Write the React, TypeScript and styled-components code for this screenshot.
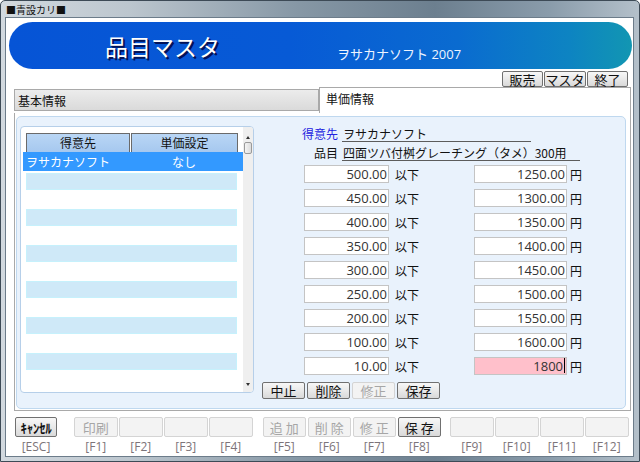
import React from "react";
import styled, { createGlobalStyle } from "styled-components";

const GlobalStyle = createGlobalStyle`
  html, body {
    margin: 0;
    padding: 0;
    background: #fff;
  }
  body {
    font-family: "Open Sans", "Noto Sans CJK JP", sans-serif;
    font-size: 12px;
    color: #111;
  }
`;

const Window = styled.div`
  width: 640px;
  height: 462px;
  box-sizing: border-box;
  border: 1px solid #3d4a56;
  border-radius: 5px 5px 0 0;
  background: linear-gradient(
    90deg,
    #d2d9df 0%,
    #bcc6ce 20%,
    #8798a6 46%,
    #6c7f8f 68%,
    #8a9cab 86%,
    #b4c0ca 100%
  );
  padding: 0 5px 4px 4px;
  display: flex;
  flex-direction: column;
`;

const TitleBar = styled.div`
  height: 16px;
  display: flex;
  align-items: center;
  padding-left: 1px;
  font-size: 10px;
  font-family: "Noto Sans CJK JP", sans-serif;
  color: #111;
`;

const Client = styled.div`
  flex: 1;
  border: 1px solid #6c7c8a;
  background: #fff;
  display: flex;
  flex-direction: column;
`;

const Banner = styled.div`
  margin: 4px 1px 0 3px;
  height: 47px;
  border-radius: 24px;
  background: linear-gradient(
    90deg,
    #0654d6 0%,
    #075ad6 45%,
    #0a6bd0 72%,
    #0d84c2 90%,
    #1296b2 100%
  );
  display: flex;
  align-items: center;
  padding-left: 96px;
`;

const BannerTitle = styled.div`
  width: 232px;
  font-family: "Noto Sans CJK JP", sans-serif;
  font-size: 23px;
  color: #fff;
  text-shadow: 1px 1px 0 #02135a, 2px 2px 0 #02135a;
`;

const BannerSub = styled.div`
  align-self: flex-end;
  margin-bottom: 7px;
  font-size: 13px;
  line-height: 16px;
  color: #eef4ff;
`;

const TopButtons = styled.div`
  display: flex;
  justify-content: flex-end;
  gap: 1px;
  margin: 2px 5px 0 0;
  height: 16px;
`;

const Button = styled.div<{ $w: number; $h: number; $off?: boolean }>`
  width: ${(p) => p.$w}px;
  height: ${(p) => p.$h}px;
  box-sizing: border-box;
  display: flex;
  align-items: center;
  justify-content: center;
  font-family: "Noto Sans CJK JP", sans-serif;
  font-size: 13px;
  border-radius: 2px;
  border: 1px solid ${(p) => (p.$off ? "#d4d4d4" : "#707070")};
  background: ${(p) =>
    p.$off ? "#f3f3f3" : "linear-gradient(#f7f7f7, #e9e9e9 50%, #d9d9d9)"};
  color: ${(p) => (p.$off ? "#a6a6a6" : "#111")};
`;

const TabRow = styled.div`
  display: flex;
  align-items: flex-start;
  height: 26px;
  margin: 0 2px 0 8px;
`;

const Tab = styled.div<{ $active?: boolean }>`
  box-sizing: border-box;
  font-family: "Noto Sans CJK JP", sans-serif;
  font-size: 12px;
  border: 1px solid #a9a9a9;
  ${(p) =>
    p.$active
      ? `
    flex: 1;
    height: 26px;
    border-bottom: none;
    background: #fff;
    padding: 2px 0 0 6px;
  `
      : `
    width: 305px;
    height: 22px;
    margin-top: 2px;
    background: linear-gradient(#ececec, #dadada);
    padding: 2px 0 0 3px;
  `}
`;

const TabPanel = styled.div`
  height: 298px;
  box-sizing: border-box;
  margin: 0 2px 0 8px;
  border: 1px solid #a9a9a9;
  border-top: none;
  padding: 3px 4px 1px 1px;
  display: flex;
`;

const BluePanel = styled.div`
  flex: 1;
  background: #e9f2fc;
  border: 1px solid #bfd8ef;
  border-radius: 5px;
  display: flex;
  align-items: flex-start;
`;

const ListBox = styled.div`
  margin: 9px 0 0 3px;
  width: 234px;
  height: 267px;
  box-sizing: border-box;
  border: 1px solid #b6cfe9;
  border-radius: 4px;
  background: #fff;
  display: flex;
  overflow: hidden;
`;

const ListBody = styled.div`
  flex: 1;
  padding-top: 6px;
  font-family: "Noto Sans CJK JP", sans-serif;
  font-size: 12px;
`;

const HeadRow = styled.div`
  display: flex;
  gap: 1px;
  margin-left: 5px;
`;

const HeadCell = styled.div<{ $w: number }>`
  width: ${(p) => p.$w}px;
  height: 19px;
  box-sizing: border-box;
  border: 1px solid #6a6a6a;
  border-bottom: none;
  background: linear-gradient(#b9d6f5, #a6c8ef);
  text-align: center;
  line-height: 18px;
`;

const SelectedRow = styled.div`
  margin-left: 2px;
  height: 19px;
  background: #3399ff;
  color: #fff;
  display: flex;
  align-items: center;
`;

const Cell = styled.div<{ $w: number; $center?: boolean }>`
  width: ${(p) => p.$w}px;
  box-sizing: border-box;
  padding-left: ${(p) => (p.$center ? 0 : 3)}px;
  text-align: ${(p) => (p.$center ? "center" : "left")};
`;

const Stripe = styled.div`
  margin: 2px 0 19px 5px;
  width: 211px;
  height: 17px;
  box-sizing: border-box;
  background: #cfe9f8;
  border: 1px solid #c6f1fc;
  & + & {
    margin-top: 0;
  }
`;

const ScrollBar = styled.div`
  width: 10px;
  background: #efefef;
  display: flex;
  flex-direction: column;
  align-items: center;
`;

const Arrow = styled.div<{ $down?: boolean }>`
  width: 0;
  height: 0;
  border-left: 2.5px solid transparent;
  border-right: 2.5px solid transparent;
  ${(p) =>
    p.$down
      ? "border-top: 3px solid #333; margin-bottom: 6px;"
      : "border-bottom: 3px solid #333; margin-top: 9px;"}
`;

const Thumb = styled.div`
  margin-top: 3px;
  width: 8px;
  height: 12px;
  box-sizing: border-box;
  border: 1px solid #9a9a9a;
  border-radius: 2px;
  background: linear-gradient(90deg, #f4f4f4, #dcdcdc);
`;

const Spacer = styled.div`
  flex: 1;
`;

const Form = styled.div`
  flex: 1;
  margin-left: 4px;
  padding-top: 9px;
  font-family: "Noto Sans CJK JP", sans-serif;
  font-size: 12px;
`;

const InfoRow = styled.div<{ $gap: number }>`
  display: flex;
  height: 16px;
  margin-bottom: ${(p) => p.$gap}px;
`;

const InfoLabel = styled.div<{ $blue?: boolean }>`
  width: 80px;
  text-align: right;
  line-height: 15px;
  color: ${(p) => (p.$blue ? "#2323e0" : "#111")};
`;

const InfoValue = styled.div<{ $w: number }>`
  width: ${(p) => p.$w}px;
  margin-left: 4px;
  padding-left: 1px;
  line-height: 15px;
  border-bottom: 1px solid #5c5c5c;
  white-space: nowrap;
`;

const PriceRow = styled.div`
  display: flex;
  align-items: center;
  height: 18px;
  margin-bottom: 6px;
  padding-left: 46px;
`;

const Field = styled.div<{ $w: number; $pink?: boolean }>`
  width: ${(p) => p.$w}px;
  height: 18px;
  box-sizing: border-box;
  border: 1px solid #c4c4c4;
  background: ${(p) => (p.$pink ? "#ffc0cb" : "#fff")};
  font-family: "Open Sans", sans-serif;
  font-size: 13px;
  line-height: 16px;
  color: #333;
  text-align: right;
  padding-right: 1px;
  white-space: nowrap;
`;

const Caret = styled.span`
  display: inline-block;
  width: 1px;
  height: 15px;
  background: #000;
  vertical-align: top;
  margin-left: 1px;
`;

const Unit = styled.div`
  width: 85px;
  box-sizing: border-box;
  padding-left: 6px;
`;

const Yen = styled.div`
  margin-left: 3px;
`;

const FormButtons = styled.div`
  display: flex;
  gap: 2px;
  margin-top: 7px;
  padding-left: 4px;
`;

const BottomBar = styled.div`
  display: flex;
  margin-top: 6px;
  padding-left: 9px;
`;

const KeyGroup = styled.div<{ $ml: number }>`
  display: flex;
  gap: 1.5px;
  margin-left: ${(p) => p.$ml}px;
`;

const KeySlot = styled.div`
  display: flex;
  flex-direction: column;
  align-items: center;
`;

const KeyLabel = styled.div`
  margin-top: 3px;
  font-size: 12px;
  line-height: 14px;
  color: #7c7479;
`;

const CancelText = styled.span`
  font-size: 13px;
  font-weight: bold;
  letter-spacing: -0.3px;
`;

const prices = [
  ["500.00", "1250.00"],
  ["450.00", "1300.00"],
  ["400.00", "1350.00"],
  ["350.00", "1400.00"],
  ["300.00", "1450.00"],
  ["250.00", "1500.00"],
  ["200.00", "1550.00"],
  ["100.00", "1600.00"],
];

type Key = { text: string; key: string; off?: boolean };

const groups: Key[][] = [
  [
    { text: "印刷", key: "[F1]", off: true },
    { text: "", key: "[F2]", off: true },
    { text: "", key: "[F3]", off: true },
    { text: "", key: "[F4]", off: true },
  ],
  [
    { text: "追 加", key: "[F5]", off: true },
    { text: "削 除", key: "[F6]", off: true },
    { text: "修 正", key: "[F7]", off: true },
    { text: "保 存", key: "[F8]" },
  ],
  [
    { text: "", key: "[F9]", off: true },
    { text: "", key: "[F10]", off: true },
    { text: "", key: "[F11]", off: true },
    { text: "", key: "[F12]", off: true },
  ],
];

const groupMargins = [17, 10, 9];

export default function App() {
  return (
    <>
      <GlobalStyle />
      <Window>
        <TitleBar>■青設カリ■</TitleBar>
        <Client>
          <Banner>
            <BannerTitle>品目マスタ</BannerTitle>
            <BannerSub>ヲサカナソフト 2007</BannerSub>
          </Banner>

          <TopButtons>
            <Button $w={41} $h={16}>販売</Button>
            <Button $w={42} $h={16}>マスタ</Button>
            <Button $w={41} $h={16}>終了</Button>
          </TopButtons>

          <TabRow>
            <Tab>基本情報</Tab>
            <Tab $active>単価情報</Tab>
          </TabRow>

          <TabPanel>
            <BluePanel>
              <ListBox>
                <ListBody>
                  <HeadRow>
                    <HeadCell $w={104}>得意先</HeadCell>
                    <HeadCell $w={107}>単価設定</HeadCell>
                  </HeadRow>
                  <SelectedRow>
                    <Cell $w={108}>ヲサカナソフト</Cell>
                    <Cell $w={106} $center>
                      なし
                    </Cell>
                  </SelectedRow>
                  {Array.from({ length: 6 }).map((_, i) => (
                    <Stripe key={i} />
                  ))}
                </ListBody>
                <ScrollBar>
                  <Arrow />
                  <Thumb />
                  <Spacer />
                  <Arrow $down />
                </ScrollBar>
              </ListBox>

              <Form>
                <InfoRow $gap={3}>
                  <InfoLabel $blue>得意先</InfoLabel>
                  <InfoValue $w={188}>ヲサカナソフト</InfoValue>
                </InfoRow>
                <InfoRow $gap={4}>
                  <InfoLabel>品目</InfoLabel>
                  <InfoValue $w={237}>四面ツバ付桝グレーチング（タメ）300用</InfoValue>
                </InfoRow>

                {prices.map(([qty, price]) => (
                  <PriceRow key={qty}>
                    <Field $w={85}>{qty}</Field>
                    <Unit>以下</Unit>
                    <Field $w={93}>{price}</Field>
                    <Yen>円</Yen>
                  </PriceRow>
                ))}
                <PriceRow>
                  <Field $w={85}>10.00</Field>
                  <Unit>以下</Unit>
                  <Field $w={93} $pink>
                    1800
                    <Caret />
                  </Field>
                  <Yen>円</Yen>
                </PriceRow>

                <FormButtons>
                  <Button $w={43} $h={17}>中止</Button>
                  <Button $w={43} $h={17}>削除</Button>
                  <Button $w={43} $h={17} $off>
                    修正
                  </Button>
                  <Button $w={43} $h={17}>保存</Button>
                </FormButtons>
              </Form>
            </BluePanel>
          </TabPanel>

          <BottomBar>
            <KeySlot>
              <Button $w={42} $h={20}>
                <CancelText>ｷｬﾝｾﾙ</CancelText>
              </Button>
              <KeyLabel>[ESC]</KeyLabel>
            </KeySlot>
            {groups.map((g, gi) => (
              <KeyGroup key={gi} $ml={groupMargins[gi]}>
                {g.map((k) => (
                  <KeySlot key={k.key}>
                    <Button $w={43.5} $h={20} $off={k.off}>
                      {k.text}
                    </Button>
                    <KeyLabel>{k.key}</KeyLabel>
                  </KeySlot>
                ))}
              </KeyGroup>
            ))}
          </BottomBar>
        </Client>
      </Window>
    </>
  );
}
